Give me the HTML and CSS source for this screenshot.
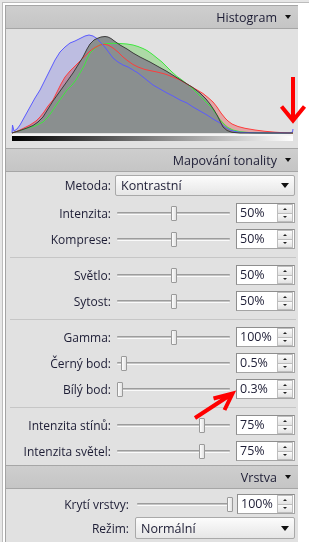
FILE: index.html
```html
<!DOCTYPE html>
<html lang="cs">
<head>
  <meta charset="UTF-8" />
  <title>Mapování tonality</title>
  <link rel="stylesheet" href="styles.css">
</head>
<body>

<div class="frame">
  <div class="inner">
    <div class="panel">

      <div class="head">Histogram <span class="caret"></span></div>

      <div class="histo">
        <svg width="292" height="119" viewBox="6 29 292 119">
          <defs>
            <linearGradient id="ramp" x1="0" x2="1" y1="0" y2="0">
              <stop offset="0" stop-color="#000"/>
              <stop offset="1" stop-color="#fff"/>
            </linearGradient>
          </defs>
          <rect x="6" y="29" width="292" height="119" fill="#e1e1e1"/>
          <!-- channel fills -->
          <polygon class="fill-b" points="12,133 12.5,125 14,131 17,129 20,125 25,116 30,107 35,98 40,90 45,80 50,70 55,60 60,52 65,47 70,43 75,41 80,38.5 85,36 89,35 93,36 97,38.5 100,42 104,46 107,50 110,54 113,58 118,62 123,65 128,67 133,70 138,73 143,77 148,81 153,85 160,89 167,93 173,96 180,100 187,103 193,107 200,111 207,115 213,119 220,123 225,127 230,130 235,131.5 240,132.3 255,132.8 270,133 290,133 293,133"/>
          <polygon class="fill-r" points="12,133 18,131 24,128 30,125 36,121 40,117 44,112 48,106 53,100 57,92 61,84 65,77 70,71 75,66 80,61 85,56 90,51 95,47.5 100,45 104,44.3 108,45 113,48 118,52 123,57 128,61 133,64.5 138,67 145,69.5 152,71 157,72 165,74 173,77 180,80 186,83.5 192,87 198,90.5 203,93.5 208,97.5 213,102 217,107 221,113 225,118 228,121 232,124 238,126.5 245,128.3 255,130 265,131.3 275,132.2 285,132.8 293,133"/>
          <polygon class="fill-g" points="12,133 18,131 26,128.5 35,126 43,122 48,117 53,110 57,104 62,97 67,90 72,85 76,80 80,73 84,66 87,59 90,53 94,49 97,46.5 100,45 104,44 108,43.5 113,43.3 120,43.5 127,44 133,45 138,46.5 143,48.5 147,50.5 152,54 157,58 162,62 167,67 172,72 177,76.5 182,80 187,84 192,88 197,93 202,98 207,103 212,108 216,114 220,119.5 224,124 228,127.5 233,130 240,131.7 250,132.6 267,133 293,133"/>
          <polygon class="fill-l" points="12,133 20,130.5 27,128 33,125.5 38,122 43,117 48,109 53,101 58,94 63,87 68,80 73,73 78,65 83,57 87,49 90,44 94,40 97,38.5 101,37 105,36.5 108,37 111,38.5 115,41.5 120,45 127,49 133,53 140,57 150,62 158,66.5 167,71.5 175,76.5 183,81.5 192,87 200,93 206,99 210,104 214,110 217,115 220,121 223,127 227,130.5 232,132.3 240,133 293,133"/>
          <!-- channel lines -->
          <polyline class="line-g" points="12,133 18,131 26,128.5 35,126 43,122 48,117 53,110 57,104 62,97 67,90 72,85 76,80 80,73 84,66 87,59 90,53 94,49 97,46.5 100,45 104,44 108,43.5 113,43.3 120,43.5 127,44 133,45 138,46.5 143,48.5 147,50.5 152,54 157,58 162,62 167,67 172,72 177,76.5 182,80 187,84 192,88 197,93 202,98 207,103 212,108 216,114 220,119.5 224,124 228,127.5 233,130 240,131.7 250,132.6 267,133 293,133"/>
          <polyline class="line-r" points="12,133 18,131 24,128 30,125 36,121 40,117 44,112 48,106 53,100 57,92 61,84 65,77 70,71 75,66 80,61 85,56 90,51 95,47.5 100,45 104,44.3 108,45 113,48 118,52 123,57 128,61 133,64.5 138,67 145,69.5 152,71 157,72 165,74 173,77 180,80 186,83.5 192,87 198,90.5 203,93.5 208,97.5 213,102 217,107 221,113 225,118 228,121 232,124 238,126.5 245,128.3 255,130 265,131.3 275,132.2 285,132.8 293,133"/>
          <polyline class="line-b" points="12,133 12.5,125 14,131 17,129 20,125 25,116 30,107 35,98 40,90 45,80 50,70 55,60 60,52 65,47 70,43 75,41 80,38.5 85,36 89,35 93,36 97,38.5 100,42 104,46 107,50 110,54 113,58 118,62 123,65 128,67 133,70 138,73 143,77 148,81 153,85 160,89 167,93 173,96 180,100 187,103 193,107 200,111 207,115 213,119 220,123 225,127 230,130 235,131.5 240,132.3 255,132.8 270,133 290,133 292.5,132 293,129"/>
          <polyline class="line-l" points="12,133 20,130.5 27,128 33,125.5 38,122 43,117 48,109 53,101 58,94 63,87 68,80 73,73 78,65 83,57 87,49 90,44 94,40 97,38.5 101,37 105,36.5 108,37 111,38.5 115,41.5 120,45 127,49 133,53 140,57 150,62 158,66.5 167,71.5 175,76.5 183,81.5 192,87 200,93 206,99 210,104 214,110 217,115 220,121 223,127 227,130.5 232,132.3 240,133 293,133"/>
          <rect x="12" y="134" width="281" height="2" fill="#f4f4f4"/>
          <rect x="12" y="136" width="281" height="5" fill="url(#ramp)"/>
        </svg>
      </div>

      <div class="head">Mapování tonality <span class="caret"></span></div>

      <div class="group first">
        <div class="row select-row">
          <label>Metoda:</label>
          <div class="select">Kontrastní <span class="caret"></span></div>
        </div>
        <div class="row">
          <label>Intenzita:</label>
          <div class="slider"><div class="track"></div><div class="thumb" style="left: 50%"></div></div>
          <div class="num"><span>50%</span><div class="spin"><b class="up"></b><b class="down"></b></div></div>
        </div>
        <div class="row">
          <label>Komprese:</label>
          <div class="slider"><div class="track"></div><div class="thumb" style="left: 50%"></div></div>
          <div class="num"><span>50%</span><div class="spin"><b class="up"></b><b class="down"></b></div></div>
        </div>
      </div>

      <div class="sep"></div>

      <div class="group">
        <div class="row">
          <label>Světlo:</label>
          <div class="slider"><div class="track"></div><div class="thumb" style="left: 50%"></div></div>
          <div class="num"><span>50%</span><div class="spin"><b class="up"></b><b class="down"></b></div></div>
        </div>
        <div class="row">
          <label>Sytost:</label>
          <div class="slider"><div class="track"></div><div class="thumb" style="left: 50%"></div></div>
          <div class="num"><span>50%</span><div class="spin"><b class="up"></b><b class="down"></b></div></div>
        </div>
      </div>

      <div class="sep"></div>

      <div class="group">
        <div class="row">
          <label>Gamma:</label>
          <div class="slider"><div class="track"></div><div class="thumb" style="left: 50%"></div></div>
          <div class="num"><span>100%</span><div class="spin"><b class="up"></b><b class="down"></b></div></div>
        </div>
        <div class="row">
          <label>Černý bod:</label>
          <div class="slider"><div class="track"></div><div class="thumb" style="left: 6%"></div></div>
          <div class="num"><span>0.5%</span><div class="spin"><b class="up"></b><b class="down"></b></div></div>
        </div>
        <div class="row">
          <label>Bílý bod:</label>
          <div class="slider"><div class="track"></div><div class="thumb" style="left: 3%"></div></div>
          <div class="num"><span>0.3%</span><div class="spin"><b class="up"></b><b class="down"></b></div></div>
        </div>
      </div>

      <div class="sep"></div>

      <div class="group last">
        <div class="row">
          <label>Intenzita stínů:</label>
          <div class="slider"><div class="track"></div><div class="thumb" style="left: 75%"></div></div>
          <div class="num"><span>75%</span><div class="spin"><b class="up"></b><b class="down"></b></div></div>
        </div>
        <div class="row">
          <label>Intenzita světel:</label>
          <div class="slider"><div class="track"></div><div class="thumb" style="left: 75%"></div></div>
          <div class="num"><span>75%</span><div class="spin"><b class="up"></b><b class="down"></b></div></div>
        </div>
      </div>

      <div class="head">Vrstva <span class="caret"></span></div>

      <div class="group layer">
        <div class="row">
          <label>Krytí vrstvy:</label>
          <div class="slider"><div class="track"></div><div class="thumb" style="left: 100%"></div></div>
          <div class="num"><span>100%</span><div class="spin"><b class="up"></b><b class="down"></b></div></div>
        </div>
        <div class="row select-row">
          <label>Režim:</label>
          <div class="select">Normální <span class="caret"></span></div>
        </div>
      </div>

    </div>
  </div>
</div>

<!-- red annotation arrows -->
<svg class="notes" width="309" height="547" viewBox="0 0 309 547">
  <path d="M293 77 V119 M281.5 106.5 L293 120.5 L304.5 106.5" />
  <path d="M195 418 L231 394.5 M213.5 398.5 L232.5 393.5 L224.5 410" />
</svg>

</body>
</html>
```

FILE: styles.css
```css
* {
  box-sizing: border-box;
}

body {
  margin: 0;
  background: #fff;
  font-family: 'Open Sans', sans-serif;
  font-size: 12px;
  color: #1d1d35;
  position: relative;
}

.frame {
  width: 309px;
  background: #e6e6e6;
  padding: 2px 0 0 2px;
}

.inner {
  background: #fff;
  border-top: 1px solid #bcbcbc;
  border-left: 1px solid #bcbcbc;
  padding: 2px 0 0 2px;
}

.panel {
  width: 293px;
  background: #e1e1e1;
  border-left: 1px solid #a4a4a4;
}

.head {
  height: 24px;
  border-top: 1px solid #a6a6a6;
  border-bottom: 1px solid #a6a6a6;
  background: linear-gradient(#cecece, #c5c5c5);
  display: flex;
  align-items: center;
  justify-content: flex-end;
  gap: 8px;
  padding-right: 7px;
  font-size: 12.5px;
}

.caret {
  width: 0;
  height: 0;
  border-left: 3.5px solid transparent;
  border-right: 3.5px solid transparent;
  border-top: 4px solid #111;
}

.histo {
  height: 119px;
}

.histo svg {
  display: block;
}

.fill-b, .fill-r, .fill-g {
  mix-blend-mode: multiply;
}

.fill-b { fill: #d6d6ff; }
.fill-r { fill: #ffbcbc; }
.fill-g { fill: #c4f8bc; }
.fill-l { fill: #8a8f8f; }

.line-b, .line-r, .line-g, .line-l {
  fill: none;
  stroke-width: 1;
  stroke-linejoin: round;
}

.line-b { stroke: #5a5aff; }
.line-r { stroke: #ff3c3c; }
.line-g { stroke: #3ee83e; }
.line-l { stroke: #3c3c3c; }

.group {
  display: flex;
  flex-direction: column;
  gap: 6px;
  padding: 7px 0 8px;
}

.group.first {
  padding-top: 3px;
}

.group.first .select-row {
  margin-bottom: 1px;
}

.group.last {
  padding-bottom: 4px;
}

.group.layer {
  padding: 5px 0 3px;
  gap: 3px;
}

.sep {
  height: 1px;
  margin: 0 2px 0 4px;
  background: #c6c6c6;
}

.row {
  display: flex;
  align-items: center;
  height: 20px;
}

.row.select-row {
  height: auto;
}

.row label {
  width: 105px;
  text-align: right;
  white-space: nowrap;
}

.slider {
  position: relative;
  width: 113px;
  height: 20px;
  margin-left: 6px;
  display: flex;
  align-items: center;
}

.track {
  flex: 1;
  height: 3px;
  border-top: 1px solid #9c9c9c;
  border-bottom: 1px solid #fafafa;
  background: #c4c4c4;
  border-radius: 1px;
}

.thumb {
  position: absolute;
  top: 3px;
  width: 6px;
  height: 15px;
  margin-left: -3px;
  border: 1px solid #9a9a9a;
  border-radius: 1px;
  background: linear-gradient(90deg, #fdfdfd, #e2e2e2);
}

.num {
  width: 59px;
  height: 20px;
  margin-left: 6px;
  display: flex;
  background: #fff;
  border: 1px solid #a4a4a4;
  border-top-color: #8e8e8e;
  border-left-color: #8e8e8e;
}

.num span {
  flex: 1;
  padding-left: 3px;
  line-height: 18px;
  font-size: 12.5px;
}

.spin {
  width: 17px;
  display: flex;
  flex-direction: column;
  padding: 0 1px 0 0;
}

.spin b {
  flex: 1;
  display: flex;
  align-items: center;
  justify-content: center;
  border: 1px solid #bdbdbd;
  background: linear-gradient(#fbfbfb, #e3e3e3);
}

.spin b + b {
  margin-top: -1px;
}

.spin b::after {
  content: "";
  width: 0;
  height: 0;
  border-left: 2px solid transparent;
  border-right: 2px solid transparent;
}

.spin .up::after {
  border-bottom: 2px solid #222;
}

.spin .down::after {
  border-top: 2px solid #222;
}

.select {
  width: 180px;
  height: 21px;
  margin-left: 4px;
  border: 1px solid #a9a9a9;
  border-radius: 2px;
  background: linear-gradient(#fcfcfc, #e6e6e6);
  display: flex;
  align-items: center;
  justify-content: space-between;
  padding: 0 5px 0 5px;
  font-size: 12.5px;
}

.select .caret {
  border-left-width: 4px;
  border-right-width: 4px;
  border-top-width: 5px;
}

.layer .row label {
  width: 123px;
}

.layer .slider {
  width: 93px;
  margin-left: 8px;
}

.layer .num {
  width: 58px;
  margin-left: 7px;
}

.layer .select {
  width: 160px;
  height: 22px;
  margin-left: 6px;
}

.notes {
  position: absolute;
  left: 0;
  top: 0;
  pointer-events: none;
}

.notes path {
  fill: none;
  stroke: #f00;
  stroke-width: 4;
  stroke-linecap: butt;
  stroke-linejoin: miter;
}
```
